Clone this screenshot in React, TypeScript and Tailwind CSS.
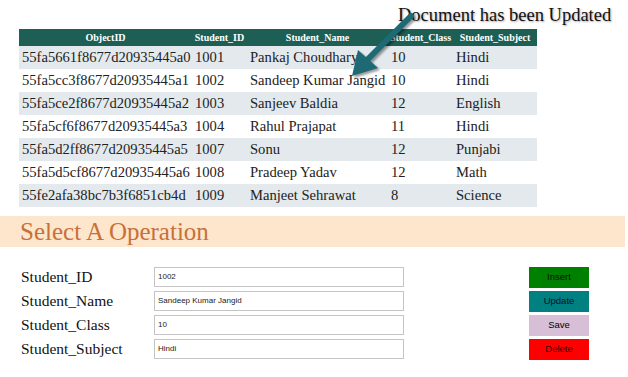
const rows = [
  ["55fa5661f8677d20935445a0", "1001", "Pankaj Choudhary", "10", "Hindi"],
  ["55fa5cc3f8677d20935445a1", "1002", "Sandeep Kumar Jangid", "10", "Hindi"],
  ["55fa5ce2f8677d20935445a2", "1003", "Sanjeev Baldia", "12", "English"],
  ["55fa5cf6f8677d20935445a3", "1004", "Rahul Prajapat", "11", "Hindi"],
  ["55fa5d2ff8677d20935445a5", "1007", "Sonu", "12", "Punjabi"],
  ["55fa5d5cf8677d20935445a6", "1008", "Pradeep Yadav", "12", "Math"],
  ["55fe2afa38bc7b3f6851cb4d", "1009", "Manjeet Sehrawat", "8", "Science"],
];

const headers = ["ObjectID", "Student_ID", "Student_Name", "Student_Class", "Student_Subject"];
const widths = ["w-[173px]", "w-[55px]", "w-[141px]", "w-[65px]", "w-[84px]"];

const fields = [
  { label: "Student_ID", value: "1002" },
  { label: "Student_Name", value: "Sandeep Kumar Jangid" },
  { label: "Student_Class", value: "10" },
  { label: "Student_Subject", value: "Hindi" },
];

const buttons = [
  { text: "Insert", cls: "bg-[#008000] text-[#011401]" },
  { text: "Update", cls: "bg-[#008080] text-[#050f30]" },
  { text: "Save", cls: "bg-[#d8bfd8] text-black" },
  { text: "Delete", cls: "bg-[#ff0000] text-[#3a0000]" },
];

export default function App() {
  return (
    <div className="relative h-[377px] w-[628px] overflow-hidden bg-white font-['Liberation_Serif',serif] text-[#222]">
      {/* student table */}
      <div className="pl-[19px] pt-[29px]">
        <table className="w-[518px] table-fixed border-collapse">
          <thead>
            <tr className="h-[17px] bg-[#1d5f55] text-[10px] font-bold text-white">
              {headers.map((h, i) => (
                <th key={h} className={`${widths[i]} p-0 text-center leading-none`}>
                  {h}
                </th>
              ))}
            </tr>
          </thead>
          <tbody>
            {rows.map((r, i) => (
              <tr key={r[0]} className={`h-[23px] text-[14.6px] ${i % 2 === 0 ? "bg-[#e3e9ec]" : "bg-white"}`}>
                {r.map((c, j) => (
                  <td key={j} className="whitespace-nowrap p-0 pl-[3px] leading-none">
                    {c}
                  </td>
                ))}
              </tr>
            ))}
          </tbody>
        </table>
      </div>

      {/* section title band */}
      <div className="mt-[9px] flex h-[31px] w-[625px] items-center bg-[#fde6cb] pl-[20px]">
        <span className="text-[25px] leading-none text-[#c8703a]">Select A Operation</span>
      </div>

      {/* form */}
      <div className="mt-[20px] flex pl-[21px]">
        <div className="flex flex-col gap-[4px]">
          {fields.map((f) => (
            <div key={f.label} className="flex h-[20px] items-center">
              <span className="w-[133px] text-[15.5px] leading-none text-[#111]">{f.label}</span>
              <div className="flex h-[20px] w-[250px] items-center border border-[#c4c4c4] bg-white pl-[3px] font-['Liberation_Sans',sans-serif] text-[8px] text-[#222]">
                {f.value}
              </div>
            </div>
          ))}
        </div>
        <div className="ml-[125px] flex flex-col gap-[3px]">
          {buttons.map((b) => (
            <div
              key={b.text}
              className={`flex h-[21px] w-[60px] items-center justify-center font-['Liberation_Sans',sans-serif] text-[9.5px] font-medium ${b.cls}`}
            >
              {b.text}
            </div>
          ))}
        </div>
      </div>

      {/* annotation callout */}
      <div className="absolute left-[398px] top-[2px] text-[18.5px] leading-normal text-[#111] [text-shadow:1px_1px_2px_rgba(0,0,0,0.35)]">
        Document has been Updated
      </div>
      <svg
        className="absolute left-[345px] top-[10px] drop-shadow-[2px_2px_1px_rgba(0,0,0,0.4)]"
        width="75"
        height="72"
        viewBox="0 0 75 72"
      >
        <line x1="66" y1="6" x2="22" y2="50" stroke="#1d6a75" strokeWidth="6" strokeLinecap="round" />
        <polygon points="7,66 13,40 33,58" fill="#1d6a75" />
      </svg>
    </div>
  );
}
